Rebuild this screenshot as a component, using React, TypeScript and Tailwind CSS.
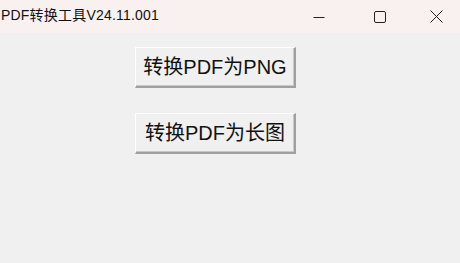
import React from "react";

const cjk = { fontFamily: '"Liberation Sans", "Noto Sans CJK SC", sans-serif' };

function WinButton({ label }: { label: string }) {
  return (
    <button
      className="w-[161px] h-[41px] bg-[#f0f0f0] text-[#111] text-[20px] leading-none border-t border-l border-t-white border-l-white border-r-2 border-b-2 border-r-[#a0a0a0] border-b-[#a0a0a0] shadow-[inset_-1px_-1px_0_#c8c8c8] flex items-center justify-center"
      style={cjk}
    >
      {label}
    </button>
  );
}

export default function App() {
  return (
    <div className="w-[460px] h-[263px] flex flex-col bg-[#f0f0f0] overflow-hidden">
      {/* title bar */}
      <div className="h-[33px] shrink-0 bg-[#f8f1f0] flex items-center">
        <span className="pl-[1px] text-[14px] tracking-[0.2px] text-[#111] flex-1 pb-[2px]" style={cjk}>
          PDF转换工具V24.11.001
        </span>
        <div className="flex h-full gap-[6px]">
          <div className="w-[58px] flex items-center justify-center">
            <svg width="12" height="12" viewBox="0 0 12 12">
              <path d="M0.5 6.5h11" stroke="#222" strokeWidth="1" />
            </svg>
          </div>
          <div className="w-[52px] flex items-center justify-center">
            <svg width="12" height="12" viewBox="0 0 12 12">
              <rect x="0.5" y="0.5" width="11" height="11" rx="1.5" fill="none" stroke="#222" strokeWidth="1" />
            </svg>
          </div>
          <div className="w-[48px] flex items-center justify-center">
            <svg width="13" height="13" viewBox="0 0 13 13">
              <path d="M0.5 0.5l12 12M12.5 0.5l-12 12" stroke="#222" strokeWidth="1" />
            </svg>
          </div>
        </div>
      </div>
      {/* body */}
      <div className="flex flex-col pl-[135px] pt-[14px] gap-[25px]">
        <WinButton label="转换PDF为PNG" />
        <WinButton label="转换PDF为长图" />
      </div>
    </div>
  );
}
